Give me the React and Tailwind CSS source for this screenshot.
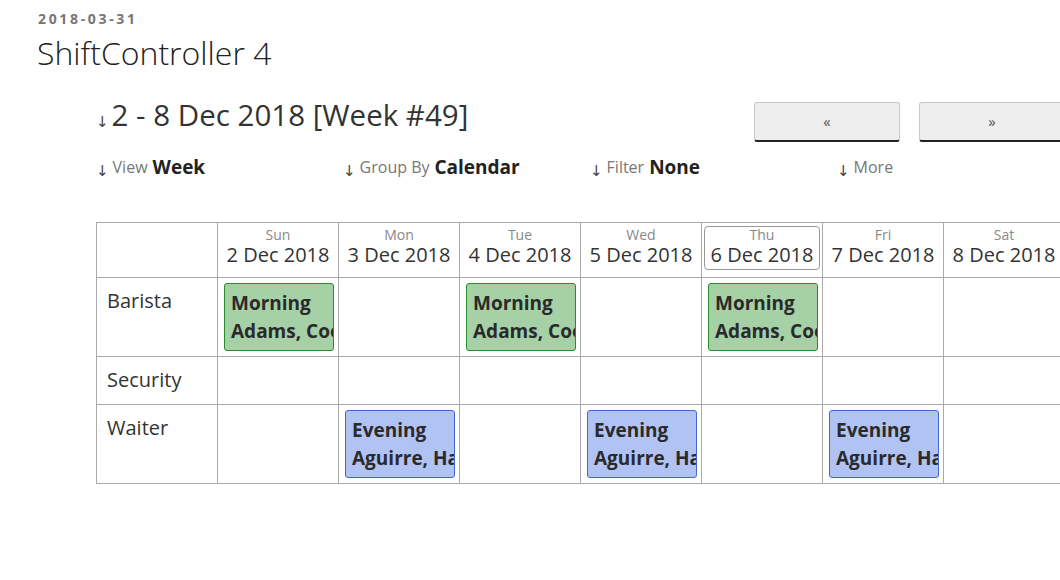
import React from "react";

const days = [
  { dow: "Sun", date: "2 Dec 2018" },
  { dow: "Mon", date: "3 Dec 2018" },
  { dow: "Tue", date: "4 Dec 2018" },
  { dow: "Wed", date: "5 Dec 2018" },
  { dow: "Thu", date: "6 Dec 2018", today: true },
  { dow: "Fri", date: "7 Dec 2018" },
  { dow: "Sat", date: "8 Dec 2018" },
];

const morning = { title: "Morning", staff: "Adams, Cooper", green: true };
const evening = { title: "Evening", staff: "Aguirre, Harris", green: false };

// rows: label, height, shifts per day index
const rows = [
  { label: "Barista", h: "h-[79px]", shifts: { 0: morning, 2: morning, 4: morning } },
  { label: "Security", h: "h-[48px]", shifts: {} },
  { label: "Waiter", h: "h-[79px]", shifts: { 1: evening, 3: evening, 5: evening } },
];

const Shift = ({ shift }) => (
  <div
    className={
      shift.green
        ? "h-[68px] w-[110px] overflow-hidden whitespace-nowrap rounded-[3px] border border-[#2b8a2b] bg-[#a6d1a6] px-[6px] pt-[5px] text-[19px] font-bold leading-[28px] text-[#2a2a2a]"
        : "h-[68px] w-[110px] overflow-hidden whitespace-nowrap rounded-[3px] border border-[#4267d9] bg-[#b1c3f3] px-[6px] pt-[5px] text-[19px] font-bold leading-[28px] text-[#2a2a2a]"
    }
  >
    <div>{shift.title}</div>
    <div>{shift.staff}</div>
  </div>
);

const FilterItem = ({ label, value }) => (
  <div className="flex items-start">
    <span className="mt-[7px] mr-[4px] text-[15px] leading-none text-[#444] [font-family:'DejaVu_Sans',sans-serif]">↓</span>
    <span className="text-[16px] leading-[20px] text-[#777]">{label}</span>
    {value && <span className="ml-[5px] text-[19px] font-bold leading-[20px] text-[#222]">{value}</span>}
  </div>
);

export default function App() {
  return (
    <div className="min-h-[580px] w-[1060px] overflow-hidden bg-white pl-[37px] pt-[12px] [font-family:'Open_Sans',sans-serif]">
      {/* header */}
      <div className="pl-[1px] text-[14px] font-bold leading-[14px] tracking-[0.19em] text-[#767676]">2018-03-31</div>
      <h1 className="mt-[9px] text-[32px] font-light leading-[36px] text-[#222]">ShiftController 4</h1>

      <div className="ml-[59px] w-[988px]">
        {/* week title + nav */}
        <div className="mt-[30px] flex items-start justify-between">
          <div className="mt-[-4px] flex">
            <span className="mt-[18px] mr-[3px] text-[15px] leading-none text-[#444] [font-family:'DejaVu_Sans',sans-serif]">↓</span>
            <span className="text-[29.5px] leading-[36px] text-[#333]">2 - 8 Dec 2018 [Week #49]</span>
          </div>
          <div className="mt-[1px] mr-[19px] flex gap-[19px]">
            <button className="h-[40px] w-[146px] rounded-[3px] border border-[#c8c8c8] border-b-2 border-b-[#222] bg-[#eee] text-[15px] text-[#555]">«</button>
            <button className="h-[40px] w-[146px] rounded-[3px] border border-[#c8c8c8] border-b-2 border-b-[#222] bg-[#eee] text-[15px] text-[#555]">»</button>
          </div>
        </div>

        {/* filters */}
        <div className="mt-[15px] grid grid-cols-4">
          <FilterItem label="View" value="Week" />
          <FilterItem label="Group By" value="Calendar" />
          <FilterItem label="Filter" value="None" />
          <FilterItem label="More" />
        </div>

        {/* calendar */}
        <table className="mt-[43px] table-fixed border-collapse">
          <thead>
            <tr className="h-[55px]">
              <th className="w-[121px] border border-[#aaa]"></th>
              {days.map((d) => (
                <th key={d.dow} className="w-[121px] border border-[#aaa] p-[2px] align-top font-normal">
                  <div
                    className={
                      d.today
                        ? "mt-[1px] rounded-[4px] border border-[#999] pb-[2px] text-center"
                        : "mt-[1px] border border-transparent pb-[2px] text-center"
                    }
                  >
                    <div className="text-[14px] leading-[15px] text-[#888]">{d.dow}</div>
                    <div className="text-[20px] leading-[25px] text-[#333]">{d.date}</div>
                  </div>
                </th>
              ))}
            </tr>
          </thead>
          <tbody>
            {rows.map((r) => (
              <tr key={r.label} className={r.h}>
                <td className="border border-[#aaa] px-[10px] pt-[10px] align-top text-[20px] leading-[26px] text-[#333]">{r.label}</td>
                {days.map((d, i) => (
                  <td key={d.dow} className="border border-[#aaa] pl-[6px] pt-[5px] align-top">
                    {r.shifts[i] && <Shift shift={r.shifts[i]} />}
                  </td>
                ))}
              </tr>
            ))}
          </tbody>
        </table>
      </div>
    </div>
  );
}
